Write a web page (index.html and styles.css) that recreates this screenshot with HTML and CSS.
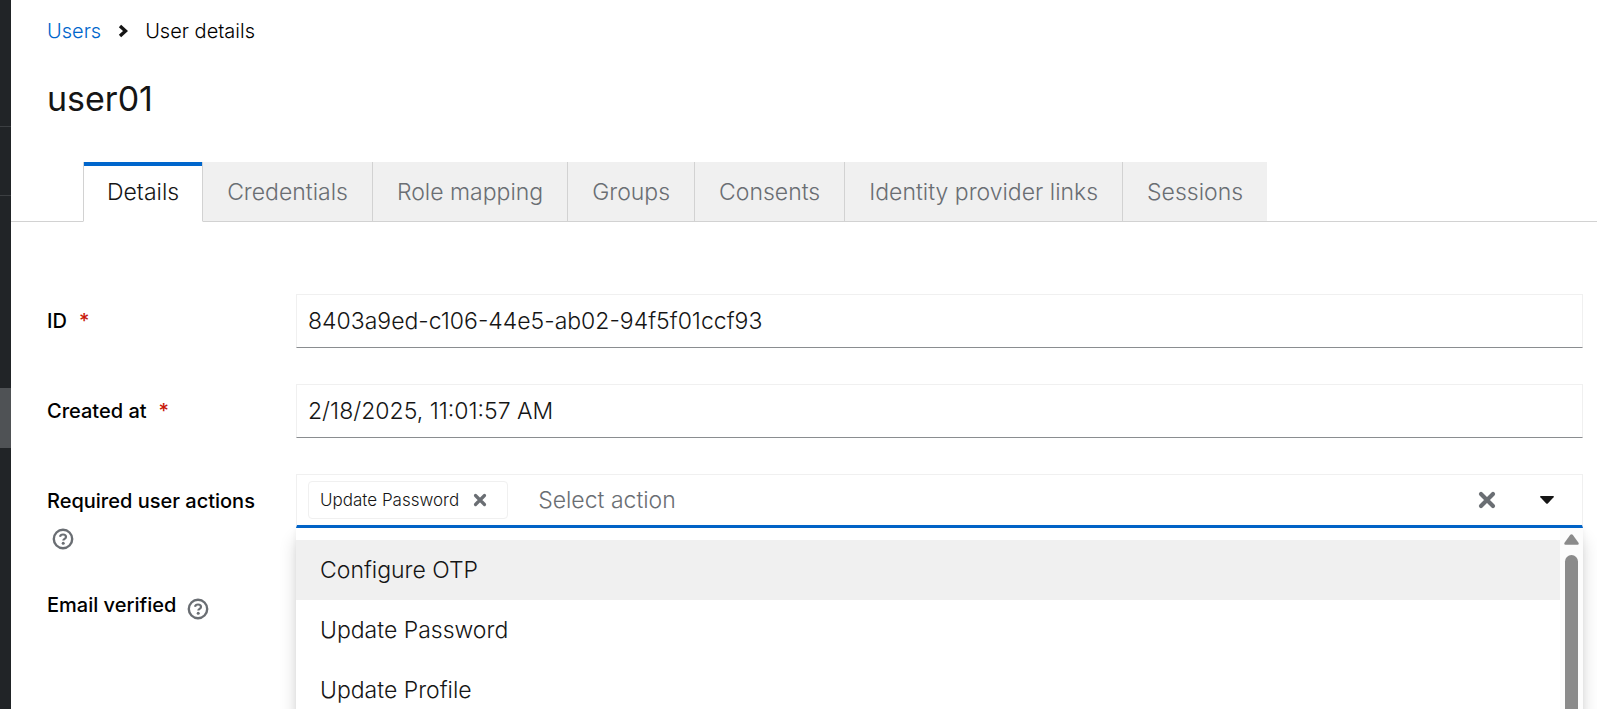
FILE: index.html
```html
<!DOCTYPE html>
<html lang="en">

<head>
    <meta charset="UTF-8">
    <meta name="viewport" content="width=device-width, initial-scale=1.0">
    <title>User details</title>
    <link rel="stylesheet" href="styles.css">
</head>

<body>
    <div class="page">
        <aside class="sidebar">
            <div class="sidebar-brand"></div>
            <div class="sidebar-realm"></div>
            <div class="sidebar-links"></div>
            <div class="sidebar-current"></div>
        </aside>
        <main class="main">
            <nav class="breadcrumb" aria-label="Breadcrumb">
                <a href="#users">Users</a>
                <svg class="breadcrumb-divider" width="10" height="14" viewBox="0 0 10 14" aria-hidden="true">
                    <path d="M2 2l5.5 5L2 12" fill="none" stroke="#151515" stroke-width="3.4" />
                </svg>
                <span>User details</span>
            </nav>
            <h1 class="title">user01</h1>
            <div class="tabs" role="tablist">
                <button class="tab tab-current" role="tab" type="button" aria-selected="true">Details</button>
                <button class="tab" role="tab" type="button">Credentials</button>
                <button class="tab" role="tab" type="button">Role mapping</button>
                <button class="tab" role="tab" type="button">Groups</button>
                <button class="tab" role="tab" type="button">Consents</button>
                <button class="tab" role="tab" type="button">Identity provider links</button>
                <button class="tab" role="tab" type="button">Sessions</button>
            </div>
            <form class="form">
                <div class="form-label">
                    <label for="user-id">ID</label><span class="required">*</span>
                </div>
                <input class="text-input" id="user-id" type="text" value="8403a9ed-c106-44e5-ab02-94f5f01ccf93" readonly>

                <div class="form-label">
                    <label for="created-at">Created at</label><span class="required">*</span>
                </div>
                <input class="text-input" id="created-at" type="text" value="2/18/2025, 11:01:57 AM" readonly>

                <div class="form-label">
                    <label for="actions">Required user actions</label>
                    <button class="help" type="button" aria-label="Help for required user actions">
                        <svg width="22" height="22" viewBox="0 0 22 22" aria-hidden="true">
                            <circle cx="11" cy="11" r="9.2" fill="none" stroke="#6a6e73" stroke-width="2.4" />
                            <path d="M8 8.8C8.300 7.300 9.500 6.500 11 6.500c1.700 0 3 .9 3 2.400 0 1.900-2.700 1.900-2.700 3.600" fill="none" stroke="#6a6e73" stroke-width="2.2" />
                            <circle cx="11.2" cy="15.2" r="1.5" fill="#6a6e73" />
                        </svg>
                    </button>
                </div>
                <div class="select">
                    <div class="select-toggle">
                        <span class="chip">
                            Update Password
                            <button class="icon-button" type="button" aria-label="Remove Update Password">
                                <svg width="14" height="14" viewBox="0 0 14 14" aria-hidden="true">
                                    <path d="M2.5 2.500l9 9m0-9l-9 9" fill="none" stroke="#6a6e73" stroke-width="3.2" stroke-linecap="round" />
                                </svg>
                            </button>
                        </span>
                        <input class="select-input" id="actions" type="text" placeholder="Select action">
                        <button class="icon-button" type="button" aria-label="Clear">
                            <svg width="18" height="18" viewBox="0 0 18 18" aria-hidden="true">
                                <path d="M3 3l12 12m0-12L3 15" fill="none" stroke="#6a6e73" stroke-width="4.2" stroke-linecap="round" />
                            </svg>
                        </button>
                        <button class="icon-button" type="button" aria-label="Toggle options">
                            <svg width="14" height="8" viewBox="0 0 14 8" aria-hidden="true">
                                <path d="M.8 0h12.4q1.2.2.4 1.200L8 7.200q-1 1-2 0L.4 1.200Q-.4.2.8 0z" fill="#151515" />
                            </svg>
                        </button>
                    </div>
                    <div class="menu">
                        <div class="menu-list" role="listbox">
                            <button class="menu-item menu-item-focus" role="option" type="button">Configure OTP</button>
                            <button class="menu-item" role="option" type="button">Update Password</button>
                            <button class="menu-item" role="option" type="button">Update Profile</button>
                        </div>
                        <div class="scrollbar">
                            <svg width="15" height="11" viewBox="0 0 15 11" aria-hidden="true">
                                <path d="M6.3.8q1.2-1.2 2.4 0l5.8 8q.8 2-1 2h-12q-1.8 0-1-2z" fill="#8b8b8b" />
                            </svg>
                            <div class="scrollbar-thumb"></div>
                        </div>
                    </div>
                </div>

                <div class="form-label form-label-flush">
                    <span>Email verified</span>
                    <button class="help" type="button" aria-label="Help for email verified">
                        <svg width="22" height="22" viewBox="0 0 22 22" aria-hidden="true">
                            <circle cx="11" cy="11" r="9.2" fill="none" stroke="#6a6e73" stroke-width="2.4" />
                            <path d="M8 8.8C8.300 7.300 9.500 6.500 11 6.500c1.700 0 3 .9 3 2.400 0 1.900-2.700 1.900-2.700 3.600" fill="none" stroke="#6a6e73" stroke-width="2.2" />
                            <circle cx="11.2" cy="15.2" r="1.5" fill="#6a6e73" />
                        </svg>
                    </button>
                </div>
            </form>
        </main>
    </div>
</body>

</html>
```
FILE: styles.css
```css
* {
    box-sizing: border-box;
}

body {
    margin: 0;
    font-family: Inter, sans-serif;
    font-size: 23px;
    font-weight: 300;
    color: #151515;
    background-color: #fff;
}

button,
input {
    font: inherit;
    color: inherit;
    background: none;
    border: 0;
    padding: 0;
    margin: 0;
    outline: none;
}

.page {
    display: flex;
    height: 100vh;
    overflow: hidden;
}

.sidebar {
    flex: none;
    width: 11px;
    background-color: #212427;
}

.sidebar-brand {
    height: 127px;
    border-bottom: 1px solid #3c3f42;
}

.sidebar-realm {
    height: 69px;
    border-bottom: 1px solid #3c3f42;
}

.sidebar-links {
    height: 192px;
}

.sidebar-current {
    height: 60px;
    background-color: #4f5255;
}

.main {
    flex: 1;
    min-width: 0;
}

.breadcrumb {
    display: flex;
    align-items: center;
    gap: 17px;
    padding: 15px 36px 0;
    font-size: 20px;
    line-height: 32px;
    color: #000;
}

.breadcrumb a {
    color: #06c;
    text-decoration: none;
}

.title {
    margin: 28px 36px 39px;
    font-size: 34px;
    font-weight: 400;
    line-height: 48px;
}

.tabs {
    display: flex;
    padding-left: 72px;
    box-shadow: inset 0 -1px #d2d2d2;
}

.tab {
    height: 60px;
    padding: 0 24px;
    color: #6a6e73;
    background-color: #f0f0f0;
    border-right: 1px solid #d2d2d2;
    border-bottom: 1px solid #d2d2d2;
    white-space: nowrap;
}

.tab:last-child {
    border-right: 0;
}

.tab-current {
    padding: 0 23px;
    color: #151515;
    background-color: #fff;
    background-image: linear-gradient(#06c, #06c);
    background-size: 100% 4px;
    background-repeat: no-repeat;
    background-origin: border-box;
    border-left: 1px solid #d2d2d2;
    border-bottom-color: #fff;
}

.form {
    display: grid;
    grid-template-columns: 237px 1fr;
    gap: 36px 12px;
    align-items: start;
    padding: 72px 14px 0 36px;
}

.form-label {
    padding-top: 10px;
    font-size: 20px;
    font-weight: 500;
    line-height: 34px;
    color: #000;
}

.form-label-flush {
    padding-top: 0;
}

.required {
    margin-left: 12px;
    color: #c9190b;
}

.help {
    padding: 4px 5px 0;
    line-height: 0;
    vertical-align: middle;
}

.text-input {
    width: 100%;
    height: 54px;
    padding: 0 11px;
    border: 1px solid #f0f0f0;
    border-bottom-color: #8a8d90;
}

.select {
    position: relative;
}

.select-toggle {
    display: flex;
    align-items: center;
    height: 54px;
    padding: 0 22px 0 11px;
    border: 1px solid #f0f0f0;
    border-bottom: 3px solid #06c;
}

.chip {
    display: flex;
    align-items: center;
    gap: 8px;
    height: 38px;
    padding: 0 14px 0 11px;
    border: 1px solid #f0f0f0;
    border-radius: 4px;
    font-size: 17px;
    white-space: nowrap;
}

.icon-button {
    display: flex;
    padding: 6px;
}

.select-input {
    flex: 1;
    min-width: 0;
    padding: 0 30px;
}

.select-input::placeholder {
    color: #6a6e73;
    opacity: 1;
}

.select-toggle > .icon-button + .icon-button {
    margin-left: 32px;
}

.menu {
    position: absolute;
    top: 100%;
    left: 0;
    width: 100%;
    height: 100vh;
    display: flex;
    background-color: #fff;
    box-shadow: 0 12px 16px rgba(3, 3, 3, .16), 0 0 6px rgba(3, 3, 3, .06);
}

.menu-list {
    flex: 1;
    padding-top: 12px;
}

.menu-item {
    display: block;
    width: 100%;
    height: 60px;
    padding: 0 24px;
    text-align: left;
}

.menu-item-focus {
    background-color: #f0f0f0;
}

.scrollbar {
    display: flex;
    flex-direction: column;
    align-items: center;
    gap: 10px;
    width: 23px;
    padding-top: 6px;
    background-color: #fcfcfc;
}

.scrollbar svg {
    flex: none;
}

.scrollbar-thumb {
    flex: 1;
    width: 13px;
    border-radius: 7px;
    background-color: #8b8b8b;
}
```
